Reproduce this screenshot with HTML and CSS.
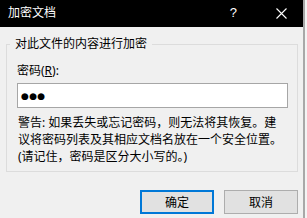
FILE: index.html
```html
<!DOCTYPE html>
<html lang="zh-CN">
<head>
<meta charset="utf-8">
<title>加密文档</title>
<link rel="stylesheet" href="styles.css">
</head>
<body>
<div class="window">
  <div class="titlebar">
    <span class="title">加密文档</span>
    <span class="help">?</span>
    <span class="close">
      <svg width="11" height="11" viewBox="0 0 11 11"><path d="M0.5 0.5 L10.5 10.5 M10.5 0.5 L0.5 10.5" stroke="#fff" stroke-width="1.1" fill="none"/></svg>
    </span>
  </div>
  <div class="body">
    <fieldset class="group">
      <legend class="legend">对此文件的内容进行加密</legend>
      <div class="lbl">密码(<span class="ul">R</span>):</div>
      <div class="input"><span class="dots">●●●</span></div>
      <p class="warn">警告: 如果丢失或忘记密码，则无法将其恢复。建<br>议将密码列表及其相应文档名放在一个安全位置。<br>(请记住，密码是区分大小写的。)</p>
    </fieldset>
    <div class="buttons">
      <button class="btn primary">确定</button>
      <button class="btn">取消</button>
    </div>
  </div>
</div>
</body>
</html>
```
FILE: styles.css
```css
html, body {
  margin: 0;
  padding: 0;
}
body {
  background: #f4f4f4;
  width: 307px;
  height: 218px;
  overflow: hidden;
  font-family: "Noto Sans", "Noto Sans CJK SC", sans-serif;
  font-size: 12px;
  color: #000;
}
.window {
  width: 303px;
  height: 218px;
  border-right: 2px solid #a8a8a8;
  background: #f0f0f0;
}
.titlebar {
  height: 27px;
  background: #000;
  color: #fff;
  display: flex;
  align-items: center;
  padding: 0 0 1px 8px;
  box-sizing: border-box;
}
.title {
  flex: 1;
  font-size: 12px;
  line-height: 16px;
}
.help {
  font-family: "Liberation Sans", sans-serif;
  font-size: 13px;
  line-height: 16px;
  margin-right: 39px;
}
.close {
  display: flex;
  width: 11px;
  height: 11px;
  margin-right: 16px;
  margin-top: 1px;
}
.body {
  display: flex;
  flex-direction: column;
}
.group {
  box-sizing: border-box;
  width: 292px;
  margin: 9px 0 0 6px;
  padding: 11px 9px 6px 10px;
  border: 1px solid #dcdcdc;
  min-inline-size: 0;
}
.legend {
  padding: 0 5px 0 5px;
  margin-left: -7px;
  line-height: 16px;
  color: #000;
}
.lbl {
  line-height: 16px;
}
.ul {
  text-decoration: underline;
}
.input {
  box-sizing: border-box;
  margin-top: 4px;
  height: 25px;
  border: 1px solid #a6a6a6;
  background: #fff;
  display: flex;
  align-items: center;
  padding-left: 3px;
}
.dots {
  font-family: "DejaVu Sans", sans-serif;
  font-size: 9px;
  letter-spacing: 0.3px;
  line-height: 10px;
}
.warn {
  margin: 6px 0 0 1px;
  line-height: 17px;
  white-space: nowrap;
}
.buttons {
  display: flex;
  justify-content: flex-end;
  gap: 10px;
  margin-top: 18px;
  padding-right: 5px;
}
.btn {
  box-sizing: border-box;
  width: 74px;
  height: 24px;
  background: #e1e1e1;
  border: 1px solid #adadad;
  font-family: "Noto Sans", "Noto Sans CJK SC", sans-serif;
  font-size: 12px;
  color: #000;
  padding: 0;
}
.btn.primary {
  border: 2px solid #0078d7;
}
```
